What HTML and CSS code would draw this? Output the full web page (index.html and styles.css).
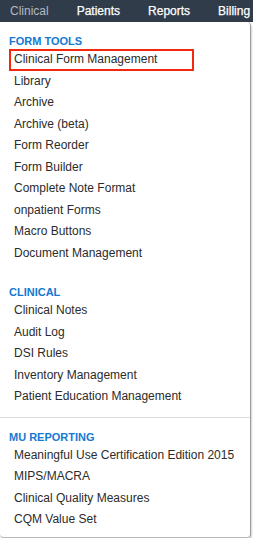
FILE: index.html
```html
<!DOCTYPE html>
<html>
<head>
<meta charset="utf-8">
<link rel="stylesheet" href="styles.css">
</head>
<body>
<nav class="topbar">
  <span class="tab tab-active">Clinical</span>
  <span class="tab">Patients</span>
  <span class="tab">Reports</span>
  <span class="tab">Billing</span>
</nav>
<div class="menu">
  <section class="group">
    <div class="group-title">FORM TOOLS</div>
    <div class="item item-marked">Clinical Form Management</div>
    <div class="item">Library</div>
    <div class="item">Archive</div>
    <div class="item">Archive (beta)</div>
    <div class="item">Form Reorder</div>
    <div class="item">Form Builder</div>
    <div class="item">Complete Note Format</div>
    <div class="item">onpatient Forms</div>
    <div class="item">Macro Buttons</div>
    <div class="item">Document Management</div>
  </section>
  <section class="group group-gap">
    <div class="group-title">CLINICAL</div>
    <div class="item">Clinical Notes</div>
    <div class="item">Audit Log</div>
    <div class="item">DSI Rules</div>
    <div class="item">Inventory Management</div>
    <div class="item">Patient Education Management</div>
  </section>
  <hr class="divider">
  <section class="group">
    <div class="group-title">MU REPORTING</div>
    <div class="item">Meaningful Use Certification Edition 2015</div>
    <div class="item">MIPS/MACRA</div>
    <div class="item">Clinical Quality Measures</div>
    <div class="item">CQM Value Set</div>
  </section>
</div>
</body>
</html>
```
FILE: styles.css
```css
html, body {
  margin: 0;
  padding: 0;
  background: #ffffff;
  font-family: "Liberation Sans", Arial, Helvetica, sans-serif;
}
.topbar {
  height: 22px;
  background: #303c4a;
  display: flex;
  align-items: center;
  white-space: nowrap;
  overflow: hidden;
  padding-left: 10px;
  gap: 28px;
}
.tab {
  color: #ffffff;
  font-size: 12px;
  line-height: 22px;
  -webkit-text-stroke: 0.25px #ffffff;
}
.tab-active {
  color: #b3bac3;
  -webkit-text-stroke: 0;
}
.menu {
  width: 250px;
  background: #ffffff;
  border-right: 1px solid #9c9c9c;
  border-bottom: 1px solid #b8b8b8;
  border-radius: 0 4px 4px 4px;
  box-shadow: 1px 2px 2px rgba(0, 0, 0, 0.18);
  padding: 11px 0 6px 0;
}
.group-title {
  padding-left: 9px;
  font-size: 11px;
  font-weight: bold;
  color: #1479d1;
  line-height: 16px;
}
.item {
  position: relative;
  padding-left: 14px;
  font-size: 12px;
  line-height: 21.5px;
  color: #2b2b2b;
  white-space: nowrap;
}
.item-marked::after {
  content: "";
  position: absolute;
  left: 9px;
  top: 0;
  width: 181px;
  height: 18px;
  border: 2px solid #f5280e;
}
.group-gap {
  margin-top: 20px;
}
.divider {
  border: 0;
  border-top: 1px solid #dcdcdc;
  margin: 9px 0 11px 0;
  height: 0;
}
```
